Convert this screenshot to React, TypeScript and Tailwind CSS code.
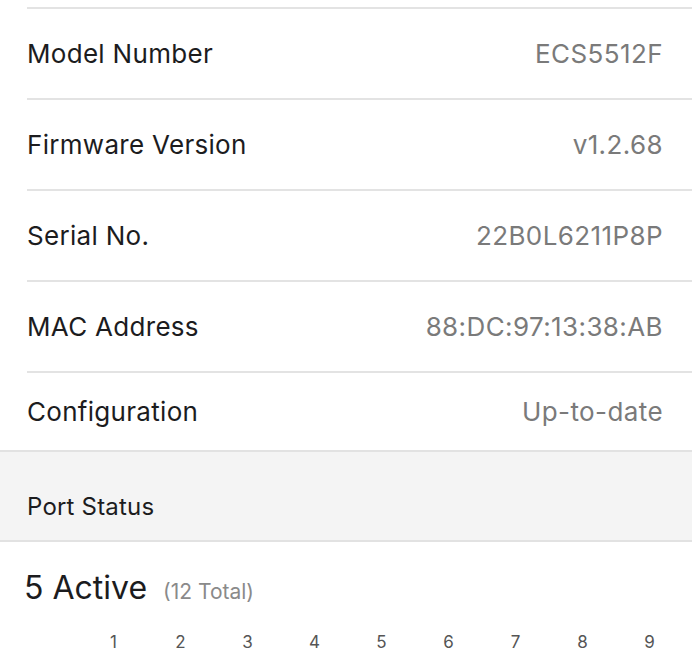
import React from 'react';

const rows = [
  { label: 'Model Number', value: 'ECS5512F' },
  { label: 'Firmware Version', value: 'v1.2.68' },
  { label: 'Serial No.', value: '22B0L6211P8P' },
  { label: 'MAC Address', value: '88:DC:97:13:38:AB' },
];

// only the ports that fit on screen
const ports = Array.from({ length: 9 }, (_, i) => i + 1);

export default function App() {
  return (
    <div
      className="w-[692px] h-[663px] overflow-hidden bg-white text-[#1c1c1e]"
      style={{ fontFamily: 'Inter, "Liberation Sans", sans-serif' }}
    >
      <div className="h-[7px]" />
      {rows.map((r) => (
        <div key={r.label} className="pl-[27px]">
          <div className="border-t-2 border-[#e3e3e3] h-[91px] flex items-center justify-between pr-[29px]">
            <span className="text-[26px] tracking-[0.3px]">{r.label}</span>
            <span className="text-[26px] text-[#7a7a7a] tracking-[0.4px]">{r.value}</span>
          </div>
        </div>
      ))}
      <div className="pl-[27px]">
        <div className="border-t-2 border-[#e3e3e3] h-[79px] flex items-center justify-between pr-[29px]">
          <span className="text-[26px] tracking-[0.3px]">Configuration</span>
          <span className="text-[26px] text-[#7a7a7a] tracking-[0.4px]">Up-to-date</span>
        </div>
      </div>
      <div className="border-y-2 border-[#e2e2e2] bg-[#f4f4f4] h-[92px] flex items-end pb-[21px] pl-[27px]">
        <span className="text-[24px] leading-none tracking-[0.2px]">Port Status</span>
      </div>
      <div className="pl-[24px] pt-[30px] flex items-baseline">
        <span className="text-[32px] leading-none">5 Active</span>
        <span className="ml-[16px] text-[21px] text-[#8a8a8a]">(12 Total)</span>
      </div>
      <div className="flex pl-[80px] pt-[22px] whitespace-nowrap">
        {ports.map((p) => (
          <span key={p} className="w-[67px] shrink-0 text-center text-[17px] text-[#555]">
            {p}
          </span>
        ))}
      </div>
    </div>
  );
}
